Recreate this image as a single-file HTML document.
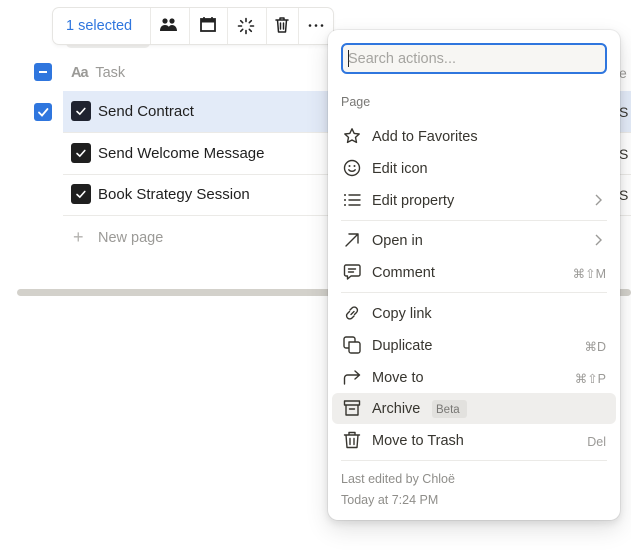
<!DOCTYPE html>
<html><head><meta charset="utf-8"><style>
*{box-sizing:border-box;margin:0;padding:0}
body{width:631px;height:550px;background:#fff;position:relative;overflow:hidden;font-family:"Liberation Sans",sans-serif;color:#37352f}
.a{position:absolute}
.t{position:absolute;white-space:nowrap;line-height:20px}
.sep{position:absolute;height:1px;background:#ebeae7}
svg{position:absolute;overflow:visible}
.ic{stroke:#37352f;fill:none;stroke-width:1.4;stroke-linecap:round;stroke-linejoin:round}
.mi{position:absolute;left:372px;font-size:14.5px;color:#37352f;white-space:nowrap;line-height:20px;margin-top:1px}
.sc{position:absolute;right:25px;font-size:12.5px;color:#9b9a97;line-height:20px;margin-top:1px}
</style></head><body>

<!-- table -->
<div class="a" style="left:63px;top:91px;width:568px;height:41px;background:#e3ebf8"></div>
<div class="sep" style="left:63px;top:132px;width:568px"></div>
<div class="sep" style="left:63px;top:174px;width:568px"></div>
<div class="sep" style="left:63px;top:215px;width:568px"></div>

<div class="a" style="left:34px;top:63px;width:18px;height:18px;border-radius:3px;background:#2f76de"></div>
<div class="a" style="left:39px;top:71px;width:8px;height:2px;background:#fff"></div>
<div class="a" style="left:34px;top:103px;width:18px;height:18px;border-radius:3px;background:#2f76de"></div>
<svg style="left:34px;top:103px" width="18" height="18"><path d="M5 9.5l3 3 5.5-6.5" stroke="#fff" stroke-width="1.8" fill="none" stroke-linecap="round"/></svg>

<div class="t" style="left:71px;top:63px;font-size:14.5px;color:#9b9a97"><b style="font-weight:bold;letter-spacing:-1px">Aa</b>&nbsp; Task</div>

<div class="a" style="left:71px;top:101px;width:20px;height:20px;border-radius:3px;background:#1f2330"></div>
<svg style="left:71px;top:101px" width="20" height="20"><path d="M6 10.5l2.8 2.6 5-5.6" stroke="#fff" stroke-width="1.6" fill="none" stroke-linecap="round"/></svg>
<div class="t" style="left:98px;top:102px;font-size:15px;color:#1f1f1f">Send Contract</div>
<div class="a" style="left:71px;top:143px;width:20px;height:20px;border-radius:3px;background:#1f1f1f"></div>
<svg style="left:71px;top:143px" width="20" height="20"><path d="M6 10.5l2.8 2.6 5-5.6" stroke="#fff" stroke-width="1.6" fill="none" stroke-linecap="round"/></svg>
<div class="t" style="left:98px;top:144px;font-size:15px;color:#1f1f1f">Send Welcome Message</div>
<div class="a" style="left:71px;top:184px;width:20px;height:20px;border-radius:3px;background:#1f1f1f"></div>
<svg style="left:71px;top:184px" width="20" height="20"><path d="M6 10.5l2.8 2.6 5-5.6" stroke="#fff" stroke-width="1.6" fill="none" stroke-linecap="round"/></svg>
<div class="t" style="left:98px;top:185px;font-size:15px;color:#1f1f1f">Book Strategy Session</div>
<div class="t" style="left:73px;top:227px;font-size:18px;color:#b3b2af">+</div>
<div class="t" style="left:98px;top:228px;font-size:14.5px;color:#9b9a97">New page</div>

<div class="t" style="left:619px;top:63px;font-size:14px;color:#9b9a97">e</div>
<div class="t" style="left:619px;top:102px;font-size:14px;color:#37352f">S</div>
<div class="t" style="left:619px;top:144px;font-size:14px;color:#37352f">S</div>
<div class="t" style="left:619px;top:185px;font-size:14px;color:#37352f">S</div>

<div class="a" style="left:17px;top:289px;width:614px;height:7px;border-radius:4px;background:#d3d1cb"></div>

<!-- toolbar -->
<div class="a" style="left:66px;top:38px;width:84px;height:10px;border-radius:6px;background:#eeedeb"></div>
<div class="a" style="left:53px;top:8px;width:280px;height:36px;border-radius:6px;background:#fff;box-shadow:0 0 0 1px #e6e5e2,0 2px 4px rgba(0,0,0,.06)"></div>
<div class="t" style="left:66px;top:16px;font-size:14.5px;color:#2f76de">1 selected</div>
<div class="a" style="left:150px;top:8px;width:1px;height:36px;background:#ebeae7"></div>
<div class="a" style="left:189px;top:8px;width:1px;height:36px;background:#ebeae7"></div>
<div class="a" style="left:227px;top:8px;width:1px;height:36px;background:#ebeae7"></div>
<div class="a" style="left:266px;top:8px;width:1px;height:36px;background:#ebeae7"></div>
<div class="a" style="left:298px;top:8px;width:1px;height:36px;background:#ebeae7"></div>
<svg style="left:159px;top:17px" width="20" height="16"><circle cx="6" cy="4" r="2.6" fill="#222"/><circle cx="13" cy="4" r="2.6" fill="#222"/><path d="M1 14c0-4 2-6 5-6s5 2 5 6zM9 14c0-4 1.5-6 4-6s5 2 5 6z" fill="#222"/></svg>
<svg style="left:199px;top:16px" width="18" height="18"><rect x="2" y="3" width="14" height="12" fill="none" stroke="#222" stroke-width="1.8"/><rect x="2" y="3" width="14" height="3.5" fill="#222"/><path d="M5 1v3M13 1v3" stroke="#222" stroke-width="1.6"/></svg>
<svg style="left:237px;top:17px" width="18" height="18"><g stroke="#222" stroke-width="1.6" stroke-linecap="round"><path d="M9 1.5v3M9 13.5v3M1.5 9h3M13.5 9h3M3.7 3.7l2 2M12.3 12.3l2 2M3.7 14.3l2-2M12.3 5.7l2-2"/></g></svg>
<svg style="left:274px;top:16px" width="16" height="18"><g class="ic" style="stroke:#222;stroke-width:1.5"><path d="M2 4h12M6 4V2h4v2M3.5 4l1 12h7l1-12M6.5 7v6M9.5 7v6"/></g></svg>
<svg style="left:308px;top:24px" width="16" height="4"><circle cx="2" cy="1.5" r="1.3" fill="#222"/><circle cx="8" cy="1.5" r="1.3" fill="#222"/><circle cx="14" cy="1.5" r="1.3" fill="#222"/></svg>

<!-- menu -->
<div class="a" style="left:328px;top:30px;width:292px;height:490px;border-radius:10px;background:#fff;box-shadow:0 0 0 1px rgba(15,15,15,.06),0 3px 8px rgba(15,15,15,.1),0 9px 24px rgba(15,15,15,.12)"></div>
<div class="a" style="left:341px;top:43px;width:266px;height:31px;border-radius:6px;border:2px solid #2f76de;background:#f7f6f3"></div>
<div class="a" style="left:348px;top:50px;width:1px;height:17px;background:#222"></div>
<div class="t" style="left:348px;top:49px;font-size:14.5px;color:#a5a4a0">Search actions...</div>
<div class="t" style="left:341px;top:92px;font-size:12.5px;color:#787774">Page</div>

<svg style="left:343px;top:127px" width="18" height="18"><path class="ic" d="M9 1.8l2.2 4.6 5 .6-3.7 3.4 1 5L9 13l-4.5 2.4 1-5L1.8 7l5-.6z"/></svg>
<div class="mi" style="top:126px">Add to Favorites</div>
<svg style="left:343px;top:159px" width="18" height="18"><g class="ic"><circle cx="9" cy="9" r="7.5"/><path d="M5.8 10.8c1.6 2 4.8 2 6.4 0"/></g><circle cx="6.5" cy="7" r="1" fill="#37352f"/><circle cx="11.5" cy="7" r="1" fill="#37352f"/></svg>
<div class="mi" style="top:158px">Edit icon</div>
<svg style="left:343px;top:191px" width="18" height="18"><g class="ic"><path d="M6 4h11M6 9h11M6 14h11"/></g><circle cx="2" cy="4" r="1" fill="#37352f"/><circle cx="2" cy="9" r="1" fill="#37352f"/><circle cx="2" cy="14" r="1" fill="#37352f"/></svg>
<div class="mi" style="top:190px">Edit property</div>
<svg style="left:593px;top:193px" width="10" height="14"><path d="M3 2l5 5-5 5" fill="none" stroke="#9b9a97" stroke-width="1.4"/></svg>
<div class="sep" style="left:341px;top:220px;width:266px"></div>

<svg style="left:343px;top:231px" width="18" height="18"><path class="ic" d="M3 15L15 3M6 3h9v9"/></svg>
<div class="mi" style="top:230px">Open in</div>
<svg style="left:593px;top:233px" width="10" height="14"><path d="M3 2l5 5-5 5" fill="none" stroke="#9b9a97" stroke-width="1.4"/></svg>
<svg style="left:343px;top:263px" width="18" height="18"><path class="ic" d="M3 2h12.5a1.5 1.5 0 0 1 1.5 1.5v8a1.5 1.5 0 0 1-1.5 1.5H8l-3.5 3v-3H3a1.5 1.5 0 0 1-1.5-1.5v-8A1.5 1.5 0 0 1 3 2zM5.5 6h7M5.5 9h5"/></svg>
<div class="mi" style="top:262px">Comment</div>
<div class="sc" style="top:263px">⌘⇧M</div>
<div class="sep" style="left:341px;top:292px;width:266px"></div>

<svg style="left:343px;top:304px" width="18" height="18"><path class="ic" d="M8 10.5l3-3M7 6l2-2a3 3 0 0 1 4.5 4.5l-2 2M11 12l-2 2A3 3 0 0 1 4.5 9.5l2-2"/></svg>
<div class="mi" style="top:303px">Copy link</div>
<svg style="left:343px;top:336px" width="18" height="18"><path class="ic" d="M6 6h9a2 2 0 0 1 2 2v7a2 2 0 0 1-2 2H8a2 2 0 0 1-2-2zM12 6V3a2 2 0 0 0-2-2H3a2 2 0 0 0-2 2v7a2 2 0 0 0 2 2h3"/></svg>
<div class="mi" style="top:335px">Duplicate</div>
<div class="sc" style="top:336px">⌘D</div>
<svg style="left:343px;top:368px" width="18" height="18"><path class="ic" d="M1.5 16V10a3 3 0 0 1 3-3h12M12 3l4.5 4-4.5 4"/></svg>
<div class="mi" style="top:367px">Move to</div>
<div class="sc" style="top:368px">⌘⇧P</div>
<div class="a" style="left:332px;top:393px;width:284px;height:31px;border-radius:6px;background:#efeeec"></div>
<svg style="left:343px;top:399px" width="18" height="18"><path class="ic" d="M1.5 2h15v4h-15zM3 6v10h12V6M6.5 10h5"/></svg>
<div class="mi" style="top:398px">Archive</div>
<div class="a" style="left:432px;top:400px;width:35px;height:18px;border-radius:3px;background:#e2e1de"></div>
<div class="t" style="left:436px;top:400px;font-size:11.5px;color:#787774">Beta</div>
<svg style="left:343px;top:431px" width="18" height="18"><path class="ic" d="M1.5 4h15M6 4V1.5h6V4M3 4l1 12.5h10L15 4M7 7.5v6M11 7.5v6"/></svg>
<div class="mi" style="top:430px">Move to Trash</div>
<div class="sc" style="top:431px">Del</div>
<div class="sep" style="left:341px;top:460px;width:266px"></div>
<div class="t" style="left:341px;top:469px;font-size:12.5px;color:#8f8e8a">Last edited by Chloë</div>
<div class="t" style="left:341px;top:490px;font-size:12.5px;color:#8f8e8a">Today at 7:24 PM</div>
</body></html>
